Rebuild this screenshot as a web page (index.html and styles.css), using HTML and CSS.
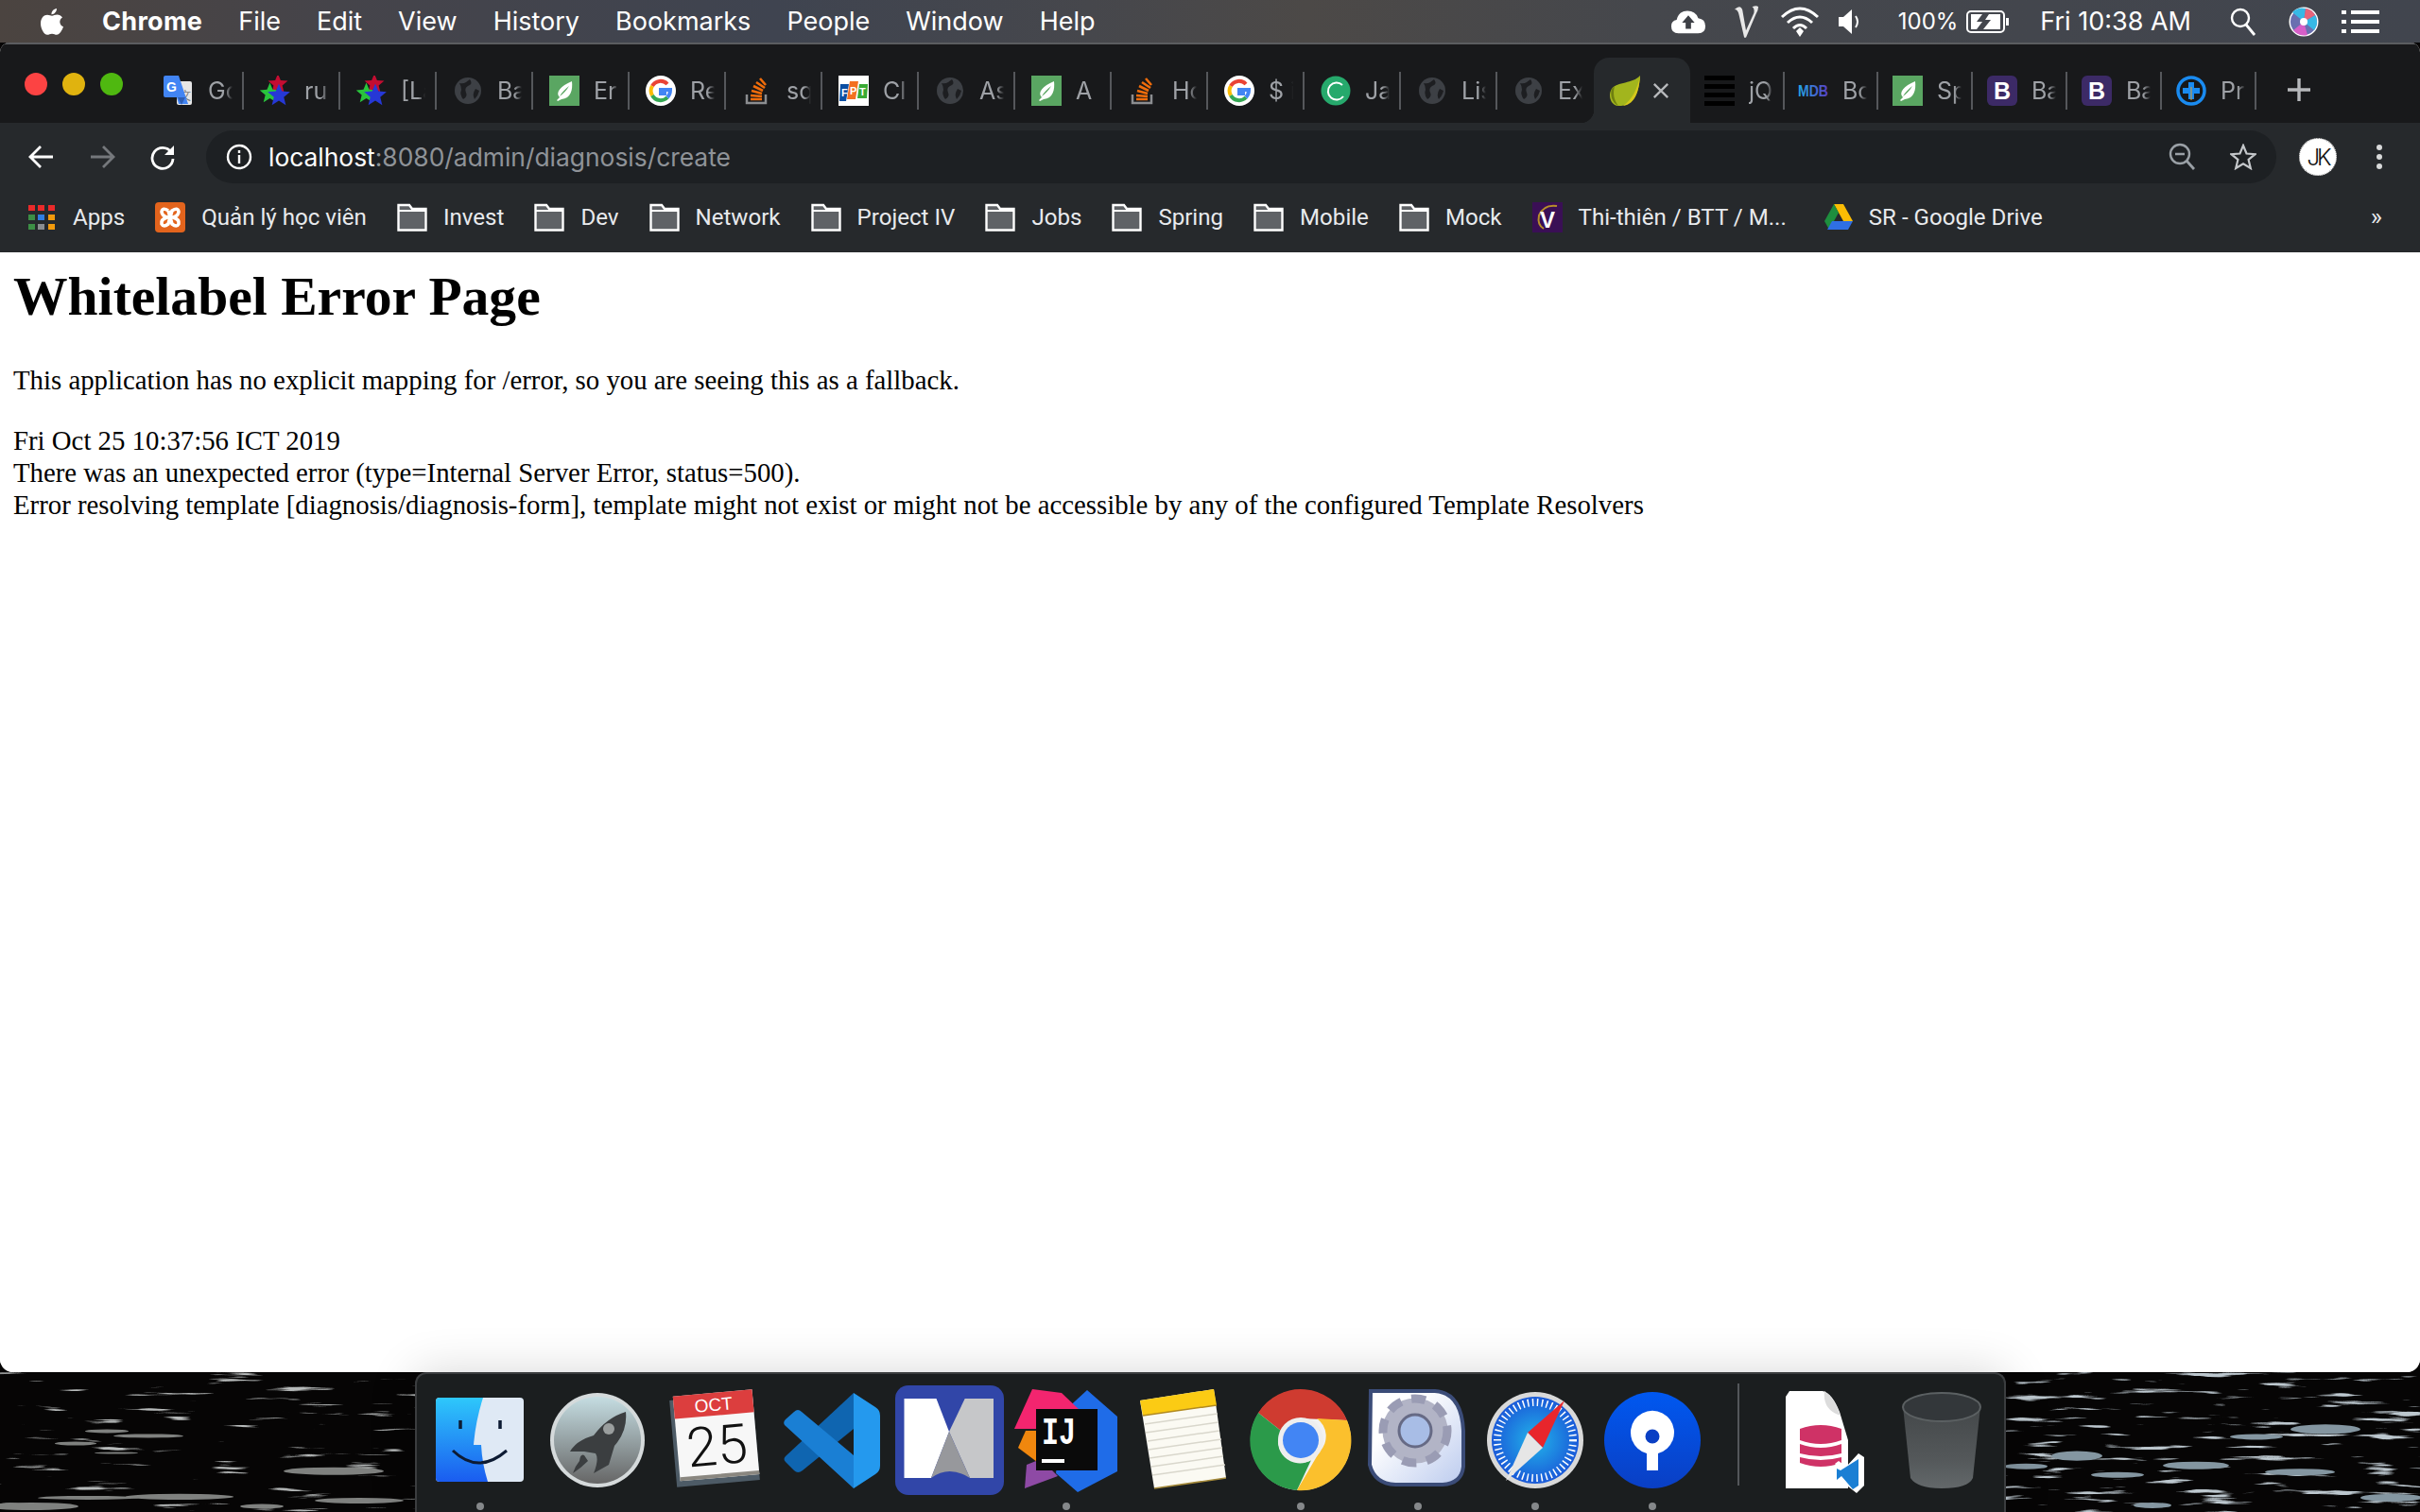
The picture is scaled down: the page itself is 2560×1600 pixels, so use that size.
FILE: index.html
```html
<!DOCTYPE html>
<html>
<head>
    <title>Whitelabel Error Page</title>
    <link rel="stylesheet" href="styles.css">
</head>
<body>
    <svg class="sprite" width="0" height="0">
        <defs>
            <polygon id="star" points="0,-10 2.6,-3.6 9.5,-3.1 4.2,1.3 5.9,8.1 0,4.4 -5.9,8.1 -4.2,1.3 -9.5,-3.1 -2.6,-3.6"/>
            <linearGradient id="mdb-b" x1="0" y1="0" x2="1" y2="0"><stop offset="0" stop-color="#22a7e8"/><stop offset="1" stop-color="#5a3fc4"/></linearGradient>
            <symbol id="fav-translate" viewBox="0 0 32 32">
                <rect x="14" y="6" width="16" height="25" rx="2" fill="#e6e6e6"/>
                <text x="17" y="26" class="cjk" font-size="12" fill="#777">文</text>
                <path d="M2 0H16L26 30H16L14 23H2Q0 23 0 21V2Q0 0 2 0Z" fill="#4285f4"/>
                <path d="M15 23L19 31L23 23Z" fill="#2f5fb5"/>
                <text x="3" y="17" class="ui-bold" font-size="14" fill="#fff">G</text>
            </symbol>
            <symbol id="fav-stars" viewBox="0 0 32 32">
                <use href="#star" transform="translate(19 9) scale(1.100)" fill="#c40d32"/>
                <use href="#star" transform="translate(10.500 19) scale(1.150)" fill="#29c43c"/>
                <use href="#star" transform="translate(20 21) scale(1.250)" fill="#2638d6"/>
            </symbol>
            <symbol id="fav-globe" viewBox="0 0 32 32">
                <circle cx="16" cy="16" r="14" fill="#3d4045"/>
                <path d="M7 8Q11 9 14 7L18 4Q22 9 16 11Q12 13 14 18Q16 22 11 25Q7 20 9 15Q9 11 7 8ZM24 14L28 16Q27 21 23 25Q20 20 24 14Z" fill="#1d1e21"/>
            </symbol>
            <symbol id="fav-leaf" viewBox="0 0 32 32">
                <rect width="32" height="32" fill="#5aa662"/>
                <path d="M24 6C25 15 23 24 13 25L9 27L8 26L11 23C6 18 12 11 24 6ZM21 11C17 14 13 18 11 22C15 19 18 16 21 11Z" fill="#fff"/>
            </symbol>
            <symbol id="fav-google" viewBox="0 0 32 32">
                <circle cx="16" cy="16" r="16" fill="#fff"/>
                <path d="M7 11A10 10 0 0 1 23 9" fill="none" stroke="#ea4335" stroke-width="4"/>
                <path d="M7 11A10 10 0 0 0 7 21" fill="none" stroke="#fbbc05" stroke-width="4"/>
                <path d="M7 21A10 10 0 0 0 23 23" fill="none" stroke="#34a853" stroke-width="4"/>
                <path d="M23 23Q26 20 26 15H16V19H22" fill="none" stroke="#4285f4" stroke-width="4"/>
            </symbol>
            <symbol id="fav-so" viewBox="0 0 32 32">
                <path d="M5 20V29H25V20" fill="none" stroke="#8b8d90" stroke-width="2.5"/>
                <path d="M9 25H21M9 21L21 22M10 16L21 19M12 11L22 16M15 7L24 13M19 3L25 10" fill="none" stroke="#ef6c0b" stroke-width="2.6"/>
            </symbol>
            <symbol id="fav-boot" viewBox="0 0 32 32">
                <rect width="32" height="32" rx="6" fill="#3c2a66"/>
                <text x="16" y="25" text-anchor="middle" class="ui-bold" font-size="25" fill="#fff">B</text>
            </symbol>
            <symbol id="folder" viewBox="0 0 32 32">
                <path d="M1.5 3H13L16 7H30.5V29.5H1.5Z" fill="#5f6266" stroke="#fff" stroke-width="2.4"/>
                <path d="M1.5 9H30.5" stroke="#fff" stroke-width="2"/>
            </symbol>
            <filter id="ripple-cold" x="0" y="0" width="100%" height="100%">
                <feTurbulence type="fractalNoise" baseFrequency="0.016 0.17" numOctaves="3" seed="11"/>
                <feColorMatrix type="matrix" values="0 0 0 0 0.50  0 0 0 0 0.57  0 0 0 0 0.62  8 0 0 0 -5.000"/>
            </filter>
            <filter id="ripple-warm" x="0" y="0" width="100%" height="100%">
                <feTurbulence type="fractalNoise" baseFrequency="0.014 0.19" numOctaves="3" seed="4"/>
                <feColorMatrix type="matrix" values="0 0 0 0 0.47  0 0 0 0 0.49  0 0 0 0 0.49  8 0 0 0 -5.400"/>
            </filter>
        </defs>
    </svg>

    <div class="screen">
        <div class="menubar">
            <svg class="apple" viewBox="0 0 26 30"><path d="M18 1C18 4.500 15 7.500 12.500 7.200C12.200 4.200 15 1.300 18 1ZM13 8.700C14.500 8.700 16 7.500 18.500 7.500C20.500 7.500 22.800 8.500 24 10.500C20 12.800 20.700 18.700 25 20.300C23.700 24 21 28.800 18 28.800C16 28.800 15.300 27.700 13 27.700C10.700 27.700 10 28.800 8 28.800C4.500 28.800 1 22 1 17C1 11 4.500 7.800 8 7.800C10.200 7.800 11.700 8.700 13 8.700Z" fill="#fff"/></svg>
            <span class="menu-app">Chrome</span>
            <span>File</span>
            <span>Edit</span>
            <span>View</span>
            <span>History</span>
            <span>Bookmarks</span>
            <span>People</span>
            <span>Window</span>
            <span>Help</span>
            <div class="status">
                <svg class="st-cloud" viewBox="0 0 40 28"><path d="M9 27Q1 27 1 19Q1 13 7 12Q9 2 19 2Q28 2 31 10Q39 11 39 19Q39 27 31 27Z" fill="#fff"/><path d="M20 7L27 15H23V22H17V15H13Z" fill="#3d3f45"/></svg>
                <svg class="st-v" viewBox="0 0 30 40"><path d="M2 6Q9 0 11 7L15 30L24 10Q25 5 22 3Q27 1 29 3Q29 7 26 12L15 38H13L7 12Q6 6 2 6Z" fill="#e8e8e8"/></svg>
                <svg class="st-wifi" viewBox="0 0 42 34"><path d="M2 12Q21 -6 40 12M8 18Q21 6 34 18M14 24Q21 17 28 24" fill="none" stroke="#fff" stroke-width="3"/><path d="M17 27L21 23L25 27L21 33Z" fill="#fff"/></svg>
                <svg class="st-sound" viewBox="0 0 26 32"><path d="M1 11H6L15 3V29L6 21H1Z" fill="#fff"/><path d="M19 10Q23 16 19 22" fill="none" stroke="#fff" stroke-width="2"/></svg>
                <span class="st-batt-text">100%</span>
                <svg class="st-batt" viewBox="0 0 46 26"><rect x="1" y="2" width="39" height="22" rx="4" fill="none" stroke="#fff" stroke-width="2"/><rect x="42" y="9" width="3" height="8" fill="#fff"/><path d="M5 5H17L11 13H17L11 21H5ZM24 5H36V21H18L26 11H20Z" fill="#fff"/></svg>
                <span class="st-clock">Fri 10:38 AM</span>
                <svg class="st-search" viewBox="0 0 28 30"><circle cx="11" cy="11" r="9" fill="none" stroke="#fff" stroke-width="2.4"/><path d="M17 18L26 29" stroke="#fff" stroke-width="2.8"/></svg>
                <svg class="st-siri" viewBox="0 0 32 32">
                    <circle cx="16" cy="16" r="15.500" fill="#fff"/>
                    <circle cx="16" cy="16" r="14" fill="#6a6fb0"/>
                    <path d="M16 16L4 6A14 14 0 0 1 18 2ZM16 16L28 9A14 14 0 0 1 27 25Z" fill="#37b9e6"/>
                    <path d="M16 16L5 25A14 14 0 0 0 20 30Z" fill="#d65ec8"/>
                    <path d="M16 16L18 2A14 14 0 0 1 28 9Z" fill="#e8647a"/>
                    <circle cx="16" cy="16" r="4" fill="#fff"/>
                </svg>
                <svg class="st-list" viewBox="0 0 40 28"><path d="M0 2H5V6H0ZM0 12H5V16H0ZM0 22H5V26H0ZM10 2H40V6H10ZM10 12H40V16H10ZM10 22H40V26H10Z" fill="#fff"/></svg>
            </div>
        </div>

        <div class="window">
            <div class="tabstrip">
                <div class="traffic">
                    <span class="light red"></span>
                    <span class="light yellow"></span>
                    <span class="light green"></span>
                </div>
                <div class="tabs">
                    <div class="tab"><svg class="fav"><use href="#fav-translate"/></svg><span class="title">Go</span></div>
                    <div class="tab"><svg class="fav"><use href="#fav-stars"/></svg><span class="title">ru</span></div>
                    <div class="tab"><svg class="fav"><use href="#fav-stars"/></svg><span class="title">[La</span></div>
                    <div class="tab"><svg class="fav"><use href="#fav-globe"/></svg><span class="title">Ba</span></div>
                    <div class="tab"><svg class="fav"><use href="#fav-leaf"/></svg><span class="title">Er</span></div>
                    <div class="tab"><svg class="fav"><use href="#fav-google"/></svg><span class="title">Re</span></div>
                    <div class="tab"><svg class="fav"><use href="#fav-so"/></svg><span class="title">sq</span></div>
                    <div class="tab">
                        <svg class="fav" viewBox="0 0 32 32">
                            <rect width="32" height="32" fill="#fff"/>
                            <path d="M2 9H11L8 27H1Z" fill="#0b4ea2"/>
                            <path d="M12 6H21L18 25H9Z" fill="#f37021"/>
                            <path d="M22 9H31L30 24H20Z" fill="#3aaa35"/>
                            <text x="3" y="22" class="ui-bold" font-size="11" fill="#fff">F</text>
                            <text x="12" y="20" class="ui-bold" font-size="11" fill="#fff">P</text>
                            <text x="22" y="21" class="ui-bold" font-size="11" fill="#fff">T</text>
                        </svg>
                        <span class="title">Cl</span>
                    </div>
                    <div class="tab"><svg class="fav"><use href="#fav-globe"/></svg><span class="title">As</span></div>
                    <div class="tab"><svg class="fav"><use href="#fav-leaf"/></svg><span class="title">A</span></div>
                    <div class="tab"><svg class="fav"><use href="#fav-so"/></svg><span class="title">Ho</span></div>
                    <div class="tab"><svg class="fav"><use href="#fav-google"/></svg><span class="title">$ i</span></div>
                    <div class="tab">
                        <svg class="fav" viewBox="0 0 32 32">
                            <circle cx="16" cy="16" r="15.500" fill="#26a96c"/>
                            <path d="M23 10A9 9 0 1 0 24 22" fill="none" stroke="#fff" stroke-width="2"/>
                        </svg>
                        <span class="title">Ja</span>
                    </div>
                    <div class="tab"><svg class="fav"><use href="#fav-globe"/></svg><span class="title">Lis</span></div>
                    <div class="tab no-sep"><svg class="fav"><use href="#fav-globe"/></svg><span class="title">Ex</span></div>
                    <div class="tab active no-sep">
                        <svg class="fav" viewBox="0 0 32 32">
                            <path d="M32 0C31 14 28 30 12 32H8C0 30 -2 20 2 14C8 6 24 9 32 0Z" fill="#a2b51d"/>
                            <path d="M2 14C0 20 2 29 9 32C4 25 3 19 5 11Z" fill="#6f7f10"/>
                            <path d="M32 0C31 14 28 30 14 32C24 25 29 14 32 0Z" fill="#d5c81c"/>
                        </svg>
                        <svg class="tab-close" viewBox="0 0 20 20"><path d="M2 2L18 18M18 2L2 18" stroke="#b6b8bb" stroke-width="2.600"/></svg>
                    </div>
                    <div class="tab rest first-rest">
                        <svg class="fav" viewBox="0 0 32 32"><path d="M0 0H32V5H0ZM0 9H32V14H0ZM0 18H32V23H0ZM0 27H32V32H0Z" fill="#000"/></svg>
                        <span class="title">jQ</span>
                    </div>
                    <div class="tab rest">
                        <svg class="fav" viewBox="0 0 32 32"><text x="0" y="22" class="ui-bold" font-size="16" fill="url(#mdb-b)" textLength="32" lengthAdjust="spacingAndGlyphs">MDB</text></svg>
                        <span class="title">Bo</span>
                    </div>
                    <div class="tab rest"><svg class="fav"><use href="#fav-leaf"/></svg><span class="title">Sp</span></div>
                    <div class="tab rest"><svg class="fav"><use href="#fav-boot"/></svg><span class="title">Ba</span></div>
                    <div class="tab rest"><svg class="fav"><use href="#fav-boot"/></svg><span class="title">Ba</span></div>
                    <div class="tab rest">
                        <svg class="fav" viewBox="0 0 32 32">
                            <circle cx="16" cy="16" r="14" fill="#16181a" stroke="#1a8bf0" stroke-width="3.500"/>
                            <path d="M16 7V25M7 16H25" stroke="#1a8bf0" stroke-width="6"/>
                            <path d="M16 12V26" stroke="#e0a030" stroke-width="1"/>
                        </svg>
                        <span class="title">Pr</span>
                    </div>
                </div>
                <svg class="new-tab" viewBox="0 0 24 24"><path d="M12 0V24M0 12H24" stroke="#b6b8bb" stroke-width="3.400"/></svg>
            </div>

            <div class="toolbar">
                <svg class="nav-btn" viewBox="0 0 28 28"><path d="M26 14H3M13 3L2 14L13 25" fill="none" stroke="#fff" stroke-width="2.800"/></svg>
                <svg class="nav-btn" viewBox="0 0 28 28"><path d="M2 14H25M15 3L26 14L15 25" fill="none" stroke="#75787c" stroke-width="2.800"/></svg>
                <svg class="nav-btn" viewBox="0 0 28 28"><path d="M23 9A11 11 0 1 0 25 16" fill="none" stroke="#fff" stroke-width="2.800"/><path d="M26 2V12H16Z" fill="#fff"/></svg>
                <div class="omnibox">
                    <svg class="omni-info" viewBox="0 0 28 28"><circle cx="14" cy="14" r="12" fill="none" stroke="#fff" stroke-width="2.400"/><path d="M14 12V21M14 7V10" stroke="#fff" stroke-width="2.400"/></svg>
                    <span class="url"><span class="url-host">localhost</span>:8080/admin/diagnosis/create</span>
                    <svg class="omni-zoom" viewBox="0 0 28 30"><circle cx="12" cy="12" r="10" fill="none" stroke="#9aa0a6" stroke-width="2.400"/><path d="M7 12H17" stroke="#9aa0a6" stroke-width="2.400"/><path d="M19 19L27 28" stroke="#9aa0a6" stroke-width="2.800"/></svg>
                    <svg class="omni-star" viewBox="0 0 28 28"><path d="M14 2L17.500 10.500L26.500 11.200L19.600 17L21.800 26L14 21.200L6.200 26L8.400 17L1.500 11.200L10.500 10.500Z" fill="none" stroke="#c4c7ca" stroke-width="2.200"/></svg>
                </div>
                <div class="avatar">JK</div>
                <svg class="kebab" viewBox="0 0 8 28"><circle cx="4" cy="4" r="3" fill="#d8d9da"/><circle cx="4" cy="14" r="3" fill="#d8d9da"/><circle cx="4" cy="24" r="3" fill="#d8d9da"/></svg>
            </div>

            <div class="bookmarks">
                <div class="bm">
                    <svg class="bm-icon" viewBox="0 0 32 32"><path d="M2 3H9V9H2Z" fill="#ea2a2a"/><path d="M12 3H19V9H12Z" fill="#ea2a2a"/><path d="M23 3H30V9H23Z" fill="#ea2a2a"/><path d="M2 13H9V19H2Z" fill="#3c8f45"/><path d="M12 13H19V19H12Z" fill="#2f7de0"/><path d="M23 13H30V19H23Z" fill="#f29a0c"/><path d="M2 23H9V29H2Z" fill="#3c8f45"/><path d="M12 23H19V29H12Z" fill="#8a8d90"/><path d="M23 23H30V29H23Z" fill="#f29a0c"/></svg>
                    <span>Apps</span>
                </div>
                <div class="bm">
                    <svg class="bm-icon" viewBox="0 0 32 32"><rect width="32" height="32" rx="4" fill="#e3641d"/><path d="M14 9Q8 5 7 10Q7 14 13 16Q6 18 7 23Q9 27 14 23L18 9Q24 5 25 10Q25 14 19 16Q26 18 25 23Q23 27 18 23L14 9" fill="none" stroke="#fff" stroke-width="3.600"/></svg>
                    <span>Quản lý học viên</span>
                </div>
                <div class="bm"><svg class="bm-icon"><use href="#folder"/></svg><span>Invest</span></div>
                <div class="bm"><svg class="bm-icon"><use href="#folder"/></svg><span>Dev</span></div>
                <div class="bm"><svg class="bm-icon"><use href="#folder"/></svg><span>Network</span></div>
                <div class="bm"><svg class="bm-icon"><use href="#folder"/></svg><span>Project IV</span></div>
                <div class="bm"><svg class="bm-icon"><use href="#folder"/></svg><span>Jobs</span></div>
                <div class="bm"><svg class="bm-icon"><use href="#folder"/></svg><span>Spring</span></div>
                <div class="bm"><svg class="bm-icon"><use href="#folder"/></svg><span>Mobile</span></div>
                <div class="bm"><svg class="bm-icon"><use href="#folder"/></svg><span>Mock</span></div>
                <div class="bm">
                    <svg class="bm-icon" viewBox="0 0 32 32"><rect width="32" height="32" fill="#3a0f55"/><path d="M26 4Q12 2 7 14Q5 24 12 28" fill="none" stroke="#b8902a" stroke-width="2"/><text x="16" y="27" text-anchor="middle" class="ui-bold" font-size="24" fill="#fff">V</text></svg>
                    <span>Thi-thiên / BTT / M...</span>
                </div>
                <div class="bm bm-drive">
                    <svg class="bm-icon drive" viewBox="0 0 30 28"><path d="M10 0H20L30 18H20Z" fill="#fbbc04"/><path d="M10 0L0 18L5 27L15 9Z" fill="#1e8e3e"/><path d="M8 18H30L25 27H3Z" fill="#2f6fe4"/></svg>
                    <span>SR - Google Drive</span>
                </div>
                <span class="bm-more">»</span>
            </div>

            <div class="content">
                <h1>Whitelabel Error Page</h1>
                <p>This application has no explicit mapping for /error, so you are seeing this as a fallback.</p>
                <div>Fri Oct 25 10:37:56 ICT 2019</div>
                <div>There was an unexpected error (type=Internal Server Error, status=500).</div>
                <div>Error resolving template [diagnosis/diagnosis-form], template might not exist or might not be accessible by any of the configured Template Resolvers</div>
            </div>
        </div>

        <svg class="wallpaper" viewBox="0 0 2560 147" preserveAspectRatio="none">
            <rect x="0" y="0" width="440" height="147" filter="url(#ripple-warm)"/>
            <rect x="2120" y="0" width="440" height="147" filter="url(#ripple-cold)"/>
            <g class="rip-warm">
                <ellipse cx="157" cy="67" rx="37" ry="2"/><ellipse cx="113" cy="62" rx="23" ry="2"/>
                <ellipse cx="80" cy="75" rx="22" ry="2"/><ellipse cx="123" cy="85" rx="23" ry="1"/>
                <ellipse cx="353" cy="104" rx="53" ry="4"/><ellipse cx="190" cy="131" rx="57" ry="3"/>
                <ellipse cx="93" cy="132" rx="53" ry="2"/><ellipse cx="33" cy="141" rx="50" ry="4"/><ellipse cx="277" cy="141" rx="23" ry="2.500"/>
                <ellipse cx="380" cy="135" rx="47" ry="3"/>
            </g>
            <g class="rip-cold">
                <ellipse cx="2197" cy="88" rx="27" ry="5"/><ellipse cx="2323" cy="98" rx="35" ry="4"/>
                <ellipse cx="2460" cy="60" rx="37" ry="5"/><ellipse cx="2387" cy="68" rx="28" ry="3"/>
                <ellipse cx="2433" cy="105" rx="37" ry="3.500"/><ellipse cx="2240" cy="108" rx="28" ry="3"/>
                <ellipse cx="2143" cy="99" rx="23" ry="3"/><ellipse cx="2530" cy="132" rx="33" ry="4"/><ellipse cx="2277" cy="140" rx="20" ry="3"/>
            </g>
        </svg>

        <div class="dock">
            <div class="dock-item running">
                <svg class="dock-icon" viewBox="0 0 124 124">
                    <defs><linearGradient id="finder-b" x1="0" y1="0" x2="0" y2="1"><stop offset="0" stop-color="#2ec8fb"/><stop offset="1" stop-color="#1a5cf0"/></linearGradient></defs>
                    <rect x="15" y="15" width="93" height="89" rx="4" fill="#dfe9f5"/>
                    <path d="M19 15H65Q57 40 55 65H63Q64 85 70 104H19Q15 104 15 100V19Q15 15 19 15Z" fill="url(#finder-b)"/>
                    <path d="M41 39V48M83 39V48" stroke="#0d1b33" stroke-width="3.500"/>
                    <path d="M33 71Q60 97 90 71" fill="none" stroke="#0d1b33" stroke-width="3"/>
                </svg>
            </div>
            <div class="dock-item">
                <svg class="dock-icon" viewBox="0 0 124 124">
                    <defs><linearGradient id="lp-b" x1="0" y1="0" x2="0" y2="1"><stop offset="0" stop-color="#c5dde2"/><stop offset="1" stop-color="#666"/></linearGradient></defs>
                    <circle cx="62" cy="60" r="50" fill="#d5dadb"/>
                    <circle cx="62" cy="60" r="46" fill="url(#lp-b)"/>
                    <path d="M92 30Q94 50 80 66L74 86L58 95Q64 80 60 74L48 72L33 72Q40 60 58 55Q72 36 92 30Z" fill="#3b3e40"/>
                    <path d="M43 82Q44 74 48 76L52 82Q44 90 36 95Q38 88 43 82Z" fill="#3b3e40"/>
                    <circle cx="74" cy="48" r="6" fill="#9a9e9e"/>
                </svg>
            </div>
            <div class="dock-item">
                <svg class="dock-icon" viewBox="0 0 124 124">
                    <g transform="rotate(-5 62 60)">
                        <rect x="18" y="14" width="88" height="92" fill="#4d5b66"/>
                        <rect x="22" y="10" width="84" height="90" fill="#f7f7f7"/>
                        <rect x="22" y="10" width="84" height="24" fill="#dc3e3e"/>
                        <rect x="22" y="96" width="84" height="4" fill="#8a8780"/>
                        <text x="64" y="29" text-anchor="middle" class="ui" font-size="19" fill="#fff">OCT</text>
                        <text x="64" y="86" text-anchor="middle" class="ui-thin" font-size="58" fill="#111">25</text>
                    </g>
                </svg>
            </div>
            <div class="dock-item">
                <svg class="dock-icon" viewBox="0 0 124 124">
                    <path d="M85 10L85 48L31 92Q26 96 22 92L13 83Q10 80 13 77Z" fill="#0f65b0"/>
                    <path d="M22 30Q26 26 30 30L85 76V111L12 44Q10 41 13 38Z" fill="#1a7fd4"/>
                    <path d="M85 10L108 25Q113 28 113 34V87Q113 93 108 96L85 111Z" fill="#2499ee"/>
                </svg>
            </div>
            <div class="dock-item">
                <svg class="dock-icon" viewBox="0 0 124 124">
                    <rect x="5" y="2" width="115" height="116" rx="14" fill="#3146a8"/>
                    <path d="M14.500 16H48.500L62 51L43 100H14.500Z" fill="#fff"/>
                    <path d="M78.700 16H109V100H84L62 51Z" fill="#c6c7c9"/>
                    <path d="M62 51L84 100H43Z" fill="#97989c"/>
                    <path d="M43 100Q62 86 84 100Z" fill="#3146a8"/>
                </svg>
            </div>
            <div class="dock-item running">
                <svg class="dock-icon" viewBox="0 0 124 124">
                    <path d="M84 7L116 35V93L74 115L51 95L59 30Z" fill="#1f6ce8"/>
                    <path d="M26 6L57 10L78 30L30 48H7Z" fill="#f3256f"/>
                    <path d="M19 50L11 68L31 83L40 50Z" fill="#f0870e"/>
                    <path d="M20 86L18 111L53 98L35 80Z" fill="#8e4aa5"/>
                    <rect x="30" y="27" width="65" height="65" fill="#0a0a0a"/>
                    <text x="36" y="64" class="mono" font-size="40" fill="#fff" textLength="36" lengthAdjust="spacingAndGlyphs">IJ</text>
                    <rect x="36" y="80" width="24" height="4" fill="#fff"/>
                </svg>
            </div>
            <div class="dock-item">
                <svg class="dock-icon" viewBox="0 0 124 124">
                    <path d="M16 18L94 6L107 100L31 111Z" fill="#fbfaf3"/>
                    <path d="M16 18L94 6L97 23L19 34Z" fill="#fbcb14"/>
                    <path d="M19 34L97 23" stroke="#b18a20" stroke-width="1.500"/>
                    <path d="M21 43L98 32M22 52L99 41M24 61L100 50M25 70L102 59M26 79L103 68M28 88L104 77M29 97L106 86" stroke="#d9d7cc" stroke-width="1.500"/>
                    <path d="M31 111L107 100" stroke="#a58a3a" stroke-width="1.500"/>
                </svg>
            </div>
            <div class="dock-item running">
                <svg class="dock-icon" viewBox="0 0 124 124">
                    <circle cx="62" cy="60" r="53" fill="#f2f2f2"/>
                    <path d="M17 31A53 53 0 0 1 111 39L62 37A23 23 0 0 0 41 50Z" fill="#cf3b30"/>
                    <path d="M17 31A53 53 0 0 0 58 113L73 81A23 23 0 0 1 41 50Z" fill="#2b9a4a"/>
                    <path d="M111 39A53 53 0 0 1 58 113L82 72A23 23 0 0 0 79 37Z" fill="#fbc02d"/>
                    <circle cx="62" cy="60" r="24" fill="#eee"/>
                    <circle cx="62" cy="60" r="19" fill="#4285f4"/>
                </svg>
            </div>
            <div class="dock-item running">
                <svg class="dock-icon" viewBox="0 0 124 124">
                    <defs><linearGradient id="pref-b" x1="0" y1="0" x2="1" y2="1"><stop offset="0.3" stop-color="#fff"/><stop offset="1" stop-color="#bccbee"/></linearGradient></defs>
                    <path d="M12 8H80Q108 10 110 50V88Q108 106 88 107H38Q16 106 11 86Z" fill="url(#pref-b)" stroke="#3b4c78" stroke-width="4"/>
                    <circle cx="59" cy="50" r="26" fill="none" stroke="#b2b4c6" stroke-width="17"/>
                    <circle cx="59" cy="50" r="34" fill="none" stroke="#9a9cb4" stroke-width="9" stroke-dasharray="15 11"/>
                    <circle cx="59" cy="50" r="17" fill="#a8bde6" stroke="#666a85" stroke-width="3"/>
                </svg>
            </div>
            <div class="dock-item running">
                <svg class="dock-icon" viewBox="0 0 124 124">
                    <defs><radialGradient id="saf-b"><stop offset="0" stop-color="#22b4ea"/><stop offset="1" stop-color="#1a5ad8"/></radialGradient></defs>
                    <circle cx="62" cy="60" r="51" fill="#d9d9d9"/>
                    <circle cx="62" cy="60" r="46" fill="url(#saf-b)"/>
                    <circle cx="62" cy="60" r="40" fill="none" stroke="#fff" stroke-width="8" stroke-dasharray="1.500 3.500"/>
                    <path d="M93 18L70 68L54 52Z" fill="#e8262c"/>
                    <path d="M54 52L70 68L31 103Z" fill="#e6e6e6"/>
                </svg>
            </div>
            <div class="dock-item running">
                <svg class="dock-icon" viewBox="0 0 124 124">
                    <defs><linearGradient id="st-b" x1="0" y1="0" x2="0" y2="1"><stop offset="0" stop-color="#0058f0"/><stop offset="1" stop-color="#0a3fc4"/></linearGradient></defs>
                    <circle cx="62" cy="60" r="51" fill="url(#st-b)"/>
                    <path d="M56 74A23 23 0 1 1 68 74V92H56Z" fill="#fff"/>
                    <circle cx="62" cy="56" r="7.500" fill="#0a3fc4"/>
                </svg>
            </div>
            <span class="dock-sep"></span>
            <div class="dock-item">
                <svg class="dock-icon" viewBox="0 0 124 124">
                    <path d="M21 14L25 8H60Q70 10 78 30L87 60V111H21Z" fill="#fff"/>
                    <path d="M62 8Q60 25 74 32L79 34Q72 14 62 8Z" fill="#dcdcdc"/>
                    <path d="M36 48Q58 40 80 48V60Q58 68 36 60ZM36 64Q58 72 80 64V74Q58 80 36 74ZM36 78Q58 84 80 78V84Q58 92 36 84Z" fill="#cf3266"/>
                    <path d="M98 74L104 78V108L96 116L78 102L74 105L72 95L77 90L73 85L77 82L85 88Z" fill="#fff"/>
                    <path d="M98 80V108L92 112L80 98L75 102V90L79 92Z" fill="#1a7fd4"/>
                </svg>
            </div>
            <div class="dock-item">
                <svg class="dock-icon" viewBox="0 0 124 124">
                    <defs><linearGradient id="trash-b" x1="0" y1="0" x2="0" y2="1"><stop offset="0" stop-color="#3f4345"/><stop offset="0.7" stop-color="#54585a"/><stop offset="1" stop-color="#63686a"/></linearGradient></defs>
                    <path d="M21 24Q62 -5 103 24L95 100Q90 111 62 111Q36 111 29 100Z" fill="url(#trash-b)"/>
                    <ellipse cx="62" cy="25" rx="41" ry="15" fill="#33373a" stroke="#5b6062" stroke-width="2"/>
                </svg>
            </div>
        </div>
    </div>
</body>
</html>
```

FILE: styles.css
```css
html, body {
    margin: 0;
    padding: 0;
    background-color: #000000;
}

.sprite {
    display: block;
    height: 0;
}

.cjk { font-family: "Noto Sans CJK SC", sans-serif; }
.ui { font-family: "Liberation Sans", sans-serif; }
.ui-bold { font-family: "Liberation Sans", sans-serif; font-weight: 700; }
.ui-thin { font-family: Roboto, sans-serif; font-weight: 300; }
.mono { font-family: "Liberation Mono", monospace; font-weight: 700; }

.screen {
    position: relative;
    width: 2560px;
    height: 1600px;
    display: flex;
    flex-direction: column;
    overflow: hidden;
    font-family: Inter, "Noto Sans", sans-serif;
    background-color: #060505;
}

/* menu bar */
.menubar {
    height: 45px;
    flex: none;
    display: flex;
    align-items: center;
    gap: 38px;
    padding-left: 42px;
    padding-right: 43px;
    box-sizing: border-box;
    color: #ffffff;
    font-size: 27px;
    background: linear-gradient(90deg, #4b4440 0%, #45444a 14%, #3f4450 32%, #46474c 45%, #4c4947 54%, #45474c 68%, #41454e 100%);
}

.apple {
    width: 26px;
    height: 30px;
    margin-right: 2px;
}

.menu-app {
    font-weight: 700;
    letter-spacing: 0.3px;
}

.status {
    margin-left: auto;
    display: flex;
    align-items: center;
}

.status svg {
    flex: none;
}

.st-cloud { width: 38px; height: 28px; }
.st-v { width: 28px; height: 38px; margin-left: 28px; }
.st-wifi { width: 42px; height: 34px; margin-left: 22px; }
.st-sound { width: 26px; height: 32px; margin-left: 19px; }
.st-batt-text { margin-left: 38px; font-size: 24px; }
.st-batt { width: 46px; height: 26px; margin-left: 9px; }
.st-clock { margin-left: 32px; }
.st-search { width: 28px; height: 30px; margin-left: 41px; }
.st-siri { width: 32px; height: 32px; margin-left: 34px; }
.st-list { width: 40px; height: 28px; margin-left: 24px; }

/* browser window */
.window {
    height: 1407px;
    flex: none;
    display: flex;
    flex-direction: column;
    border-radius: 10px 10px 14px 14px;
    overflow: hidden;
    background-color: #ffffff;
}

.tabstrip {
    height: 85px;
    flex: none;
    box-sizing: border-box;
    display: flex;
    align-items: flex-end;
    background-color: #18191b;
    border-top: 2px solid #5b5d60;
}

.traffic {
    width: 156px;
    height: 83px;
    flex: none;
    box-sizing: border-box;
    display: flex;
    align-items: center;
    gap: 16px;
    padding-left: 26px;
}

.light {
    width: 24px;
    height: 24px;
    border-radius: 50%;
}

.red { background-color: #fc4343; }
.yellow { background-color: #e0b30f; }
.green { background-color: #4fb810; }

.tabs {
    display: flex;
    height: 69px;
}

.tab {
    width: 102px;
    height: 69px;
    flex: none;
    box-sizing: border-box;
    display: flex;
    align-items: center;
    padding-left: 17px;
}

.tab::after {
    content: "";
    width: 2px;
    height: 40px;
    margin-left: auto;
    background-color: #55575b;
}

.tab.no-sep::after {
    display: none;
}

.tab.rest {
    width: 100px;
    padding-left: 15px;
}

.first-rest {
    margin-right: -1px;
}

.fav {
    width: 32px;
    height: 32px;
    flex: none;
}

.title {
    width: 26px;
    margin-left: 15px;
    overflow: hidden;
    white-space: nowrap;
    color: #9ea1a6;
    font-size: 25px;
    -webkit-mask-image: linear-gradient(90deg, #000 70%, transparent);
    mask-image: linear-gradient(90deg, #000 70%, transparent);
}

.tab.active {
    position: relative;
    background-color: #26292c;
    border-radius: 16px 16px 0 0;
}

.tab.active::before {
    content: "";
    position: absolute;
    left: -14px;
    bottom: 0;
    width: 14px;
    height: 14px;
    background: radial-gradient(circle at 0 0, transparent 14px, #26292c 14.5px);
}

.tab-close {
    width: 18px;
    height: 18px;
    margin-left: 13px;
}

.new-tab {
    width: 24px;
    height: 24px;
    margin-left: 33px;
    margin-bottom: 23px;
    flex: none;
}

.toolbar {
    height: 72px;
    flex: none;
    display: flex;
    align-items: center;
    box-sizing: border-box;
    padding-left: 30px;
    background-color: #26292c;
}

.nav-btn {
    width: 28px;
    height: 28px;
    flex: none;
    margin-right: 36px;
}

.omnibox {
    width: 2190px;
    height: 56px;
    margin-left: -4px;
    box-sizing: border-box;
    display: flex;
    align-items: center;
    padding-left: 21px;
    border-radius: 28px;
    background-color: #1d2023;
}

.omni-info {
    width: 28px;
    height: 28px;
    flex: none;
}

.url {
    margin-left: 17px;
    color: #8f9398;
    font-size: 26.4px;
}

.url-host {
    color: #ffffff;
}

.omni-zoom {
    width: 28px;
    height: 30px;
    margin-left: auto;
}

.omni-star {
    width: 28px;
    height: 28px;
    margin-left: 37px;
    margin-right: 21px;
}

.avatar {
    width: 40px;
    height: 40px;
    margin-left: 24px;
    flex: none;
    display: flex;
    align-items: center;
    justify-content: center;
    border-radius: 50%;
    border: 1px dotted #888;
    box-sizing: border-box;
    background-color: #ffffff;
    color: #111111;
    font-size: 24px;
    font-weight: 300;
    letter-spacing: -3px;
}

.kebab {
    width: 8px;
    height: 28px;
    margin-left: 41px;
    flex: none;
}

.bookmarks {
    height: 65px;
    flex: none;
    box-sizing: border-box;
    display: flex;
    align-items: flex-start;
    gap: 32px;
    padding-left: 28px;
    padding-right: 40px;
    padding-top: 12px;
    color: #e8eaed;
    font-family: Roboto, sans-serif;
    font-size: 24.1px;
    background-color: #26292c;
}

.bm {
    display: flex;
    align-items: center;
    height: 32px;
    gap: 17px;
    white-space: nowrap;
}

.bm-drive {
    margin-left: 8px;
}

.bm-icon {
    width: 32px;
    height: 32px;
    flex: none;
}

.bm-icon.drive {
    width: 30px;
    height: 28px;
}

.bm-more {
    margin-left: auto;
    font-size: 26px;
    line-height: 30px;
}

/* error page */
.content {
    flex: 1;
    padding: 14px 14px;
    background-color: #ffffff;
    color: #000000;
    font-family: "Liberation Serif", serif;
    font-size: 28.8px;
    line-height: 34px;
}

h1 {
    margin: 0 0 38px 0;
    font-size: 57.6px;
    line-height: 66px;
}

p {
    margin: 0 0 30px 0;
}

/* desktop behind the window */
.wallpaper {
    height: 148px;
    width: 2560px;
    flex: none;
    display: block;
}

.rip-warm { fill: #7f817f; }
.rip-cold { fill: #8496a1; }

.dock {
    position: absolute;
    left: 439px;
    top: 1452px;
    width: 1683px;
    height: 148px;
    box-sizing: border-box;
    display: flex;
    align-items: flex-start;
    padding: 10px 0 0 5px;
    border: 2px solid #3b3d3f;
    border-bottom: none;
    border-radius: 12px 12px 0 0;
    background-color: #1b1e1f;
    box-shadow: 0 0 50px rgba(0, 0, 0, 0.16);
}

.dock-item {
    position: relative;
    width: 124px;
    height: 134px;
    flex: none;
}

.dock-icon {
    display: block;
    width: 124px;
    height: 124px;
}

.dock-item.running::after {
    content: "";
    display: block;
    width: 8px;
    height: 8px;
    margin: 2px auto 0;
    border-radius: 50%;
    background-color: #85888a;
}

.dock-sep {
    width: 2px;
    height: 108px;
    margin: 0 28px 0 28px;
    flex: none;
    background-color: #54575a;
}
```
